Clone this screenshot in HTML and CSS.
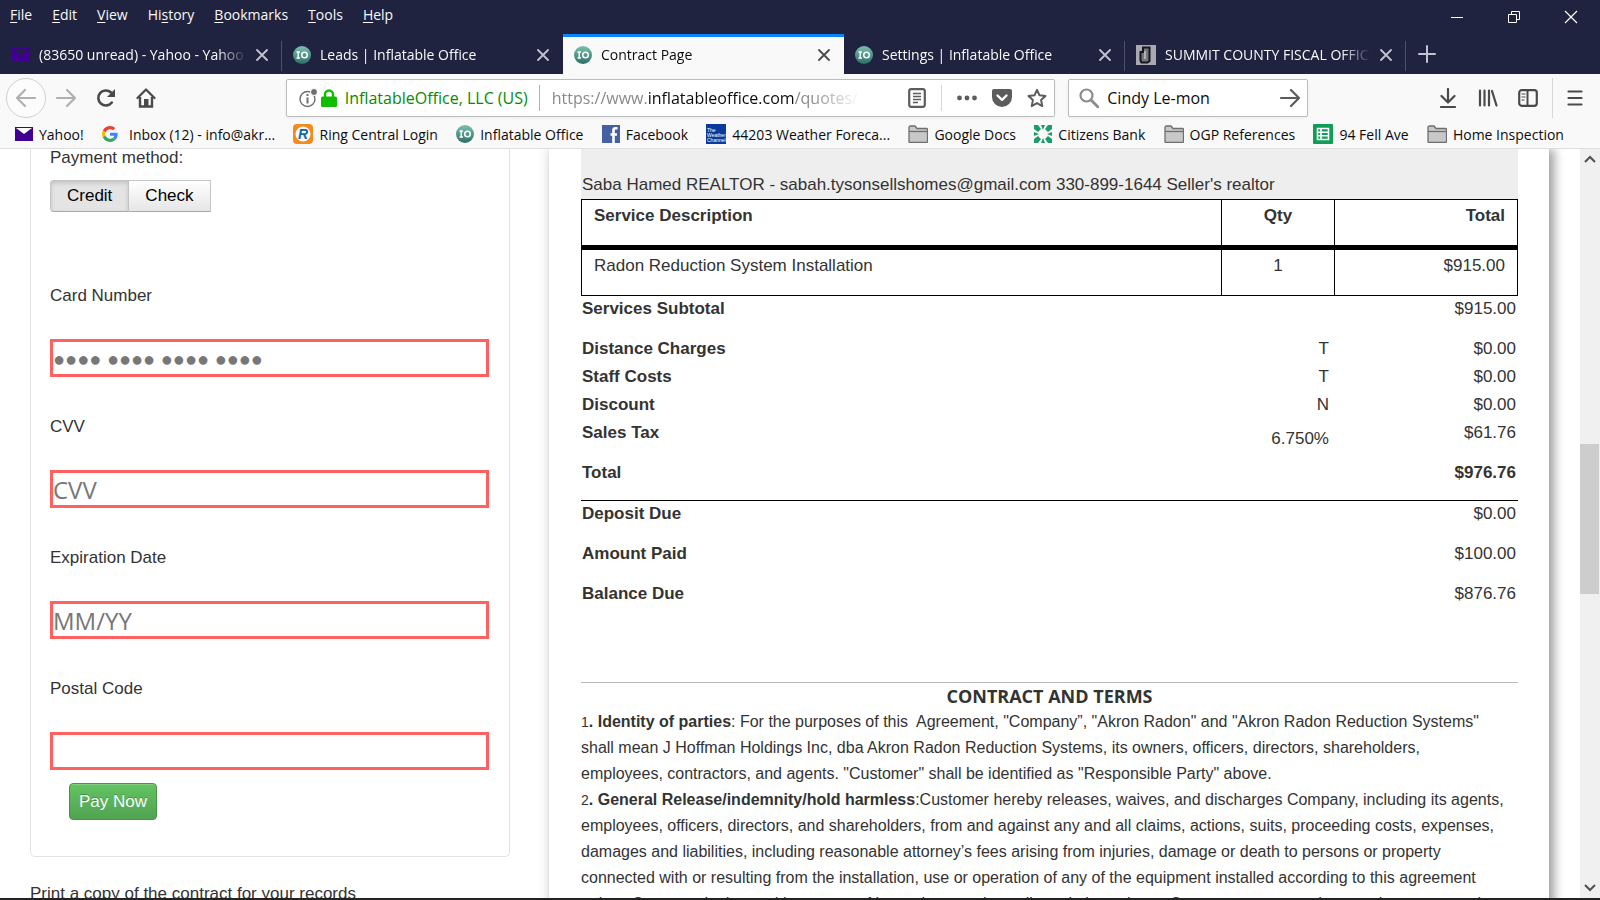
FILE: index.html
```html
<!DOCTYPE html>
<html lang="en">
<head>
    <meta charset="UTF-8">
    <meta name="viewport" content="width=device-width, initial-scale=1.0">
    <title>Contract Page</title>
    <link rel="stylesheet" href="styles.css">
</head>
<body>
    <!-- Shared icons -->
    <svg class="defs" width="0" height="0">
        <defs>
            <linearGradient id="io-bg" x1="0" y1="0" x2="0" y2="1">
                <stop offset="0" stop-color="#7cc0b0"/>
                <stop offset="1" stop-color="#2c6f66"/>
            </linearGradient>
            <symbol id="io" viewBox="0 0 18 18">
                <circle cx="9" cy="9" r="9" fill="url(#io-bg)"/>
                <path d="M3.5 6h3.5M3.5 12h3.5M5.2 6v6" stroke="#fff" stroke-width="1.4" fill="none"/>
                <circle cx="11.5" cy="9" r="2.8" stroke="#fff" stroke-width="1.5" fill="none"/>
            </symbol>
            <symbol id="close" viewBox="0 0 12 12">
                <path d="M1 1l10 10M11 1L1 11" stroke="currentColor" stroke-width="1.8" stroke-linecap="round"/>
            </symbol>
            <symbol id="mail" viewBox="0 0 18 14">
                <path d="M0 0h18v14H0z" fill="#400090"/>
                <path d="M1 1l8 6 8-6z" fill="var(--flap)"/>
            </symbol>
            <symbol id="folder" viewBox="0 0 20 18">
                <path d="M1 16.500V2.500Q1 1 2.500 1H7l2 2.500h9.500q1 0 1 1V16.500q0 1-1 1H2q-1 0-1-1z" fill="#c8c8c8" stroke="#6e6e6e" stroke-width="1.300"/>
                <path d="M1 6.500h18.500" stroke="#6e6e6e" stroke-width="1.300"/>
            </symbol>
        </defs>
    </svg>

    <header class="titlebar">
        <nav class="menubar">
            <button><u>F</u>ile</button>
            <button><u>E</u>dit</button>
            <button><u>V</u>iew</button>
            <button>Hi<u>s</u>tory</button>
            <button><u>B</u>ookmarks</button>
            <button><u>T</u>ools</button>
            <button><u>H</u>elp</button>
        </nav>
        <div class="window-controls">
            <button aria-label="Minimize"><svg width="14" height="14"><path d="M1 7.500h12" stroke="#fff"/></svg></button>
            <button aria-label="Restore"><svg width="14" height="14" fill="none" stroke="#fff"><path d="M1.500 4.500h8v8h-8zM4.500 4.500v-3h8v8h-3"/></svg></button>
            <button aria-label="Close"><svg width="14" height="14"><path d="M1 1l12 12M13 1L1 13" stroke="#fff" stroke-width="1.200"/></svg></button>
        </div>
    </header>

    <div class="tabs">
        <div class="tab">
            <svg class="fav dark-mail" width="18" height="14"><use href="#mail"/></svg>
            <span class="tab-title">(83650 unread) - Yahoo - Yahoo Mail</span>
            <button class="tab-close" aria-label="Close tab"><svg width="12" height="12"><use href="#close"/></svg></button>
        </div>
        <div class="tab">
            <svg class="fav" width="18" height="18"><use href="#io"/></svg>
            <span class="tab-title">Leads | Inflatable Office</span>
            <button class="tab-close" aria-label="Close tab"><svg width="12" height="12"><use href="#close"/></svg></button>
        </div>
        <div class="tab active">
            <svg class="fav" width="18" height="18"><use href="#io"/></svg>
            <span class="tab-title">Contract Page</span>
            <button class="tab-close" aria-label="Close tab"><svg width="12" height="12"><use href="#close"/></svg></button>
        </div>
        <div class="tab">
            <svg class="fav" width="18" height="18"><use href="#io"/></svg>
            <span class="tab-title">Settings | Inflatable Office</span>
            <button class="tab-close" aria-label="Close tab"><svg width="12" height="12"><use href="#close"/></svg></button>
        </div>
        <div class="tab">
            <svg class="fav" width="20" height="20" viewBox="0 0 20 20">
                <path d="M0 0h20v20H0z" fill="#a9a9b4"/>
                <path d="M7 2.500h6.500V16l-2 1.500H5.500l-1-2V7H7z" fill="#777783" stroke="#17171c" stroke-width="2"/>
                <path d="M9 6v8" stroke="#c4c4cc" stroke-width="1.500"/>
            </svg>
            <span class="tab-title">SUMMIT COUNTY FISCAL OFFICE</span>
            <button class="tab-close" aria-label="Close tab"><svg width="12" height="12"><use href="#close"/></svg></button>
        </div>
        <button class="new-tab" aria-label="New tab"><svg width="18" height="18"><path d="M9 1v16M1 9h16" stroke="#c3c3cf" stroke-width="2" stroke-linecap="round"/></svg></button>
    </div>

    <div class="toolbar">
        <button class="back" aria-label="Back"><svg width="22" height="20" fill="none" stroke="#b0b0b2" stroke-width="2.200" stroke-linecap="round" stroke-linejoin="round"><path d="M20 10H2M10 2l-8 8 8 8"/></svg></button>
        <button class="tool" aria-label="Forward"><svg width="22" height="20" fill="none" stroke="#b0b0b2" stroke-width="2.200" stroke-linecap="round" stroke-linejoin="round"><path d="M2 10h18M12 2l8 8-8 8"/></svg></button>
        <button class="tool" aria-label="Reload"><svg width="20" height="20"><path d="M15.800 14.500A7.500 7.500 0 1 1 15 4.500" fill="none" stroke="#4a4a4b" stroke-width="2.600" stroke-linecap="round"/><path d="M19 1v8h-8z" fill="#4a4a4b"/></svg></button>
        <button class="tool" aria-label="Home"><svg width="20" height="20"><path d="M1.500 10L10 1.500l8.500 8.500" fill="none" stroke="#4a4a4b" stroke-width="2.200" stroke-linecap="round" stroke-linejoin="round"/><path d="M4 9v9.500h12V9" fill="none" stroke="#4a4a4b" stroke-width="2.400"/><path d="M8 11h4.500v8H8z" fill="#4a4a4b"/></svg></button>
        <span class="spacer"></span>
        <div class="urlbar">
            <svg width="18" height="20"><circle cx="8.500" cy="11" r="7.500" fill="none" stroke="#6e6e6e" stroke-width="1.400"/><path d="M8.500 9.500v6M8.500 6v2" stroke="#6e6e6e" stroke-width="2"/><circle cx="15" cy="4" r="3.500" fill="#6e6e6e" stroke="#fff"/></svg>
            <svg width="16" height="18"><path d="M4 8V5.500a4 4 0 0 1 8 0V8" fill="none" stroke="#12bc00" stroke-width="2.400"/><rect y="7.500" width="16" height="10.500" rx="1.500" fill="#12bc00"/></svg>
            <span class="owner">InflatableOffice, LLC (US)</span>
            <a class="url" href="#">https://www.<b>inflatableoffice.com</b>/quotes/</a>
            <button class="reader" aria-label="Reader view"><svg width="18" height="20" fill="none" stroke="#5c5c5e"><rect x="1.200" y="1.200" width="15.600" height="17.600" rx="2" stroke-width="2.200"/><path d="M5 5.500h8M5 8.500h8M5 11.500h8M5 14.500h5" stroke-width="1.300"/></svg></button>
            <button aria-label="Page actions"><svg width="20" height="6" fill="#5c5c5e"><circle cx="2.500" cy="3" r="2.400"/><circle cx="10" cy="3" r="2.400"/><circle cx="17.500" cy="3" r="2.400"/></svg></button>
            <button aria-label="Save to Pocket"><svg width="20" height="18"><path d="M2 0h16q2 0 2 2v6a10 10 0 0 1-20 0V2Q0 0 2 0z" fill="#5c5c5e"/><path d="M5.500 6.500L10 10.800l4.500-4.300" fill="none" stroke="#fff" stroke-width="2.400" stroke-linecap="round" stroke-linejoin="round"/></svg></button>
            <button aria-label="Bookmark this page"><svg width="20" height="20"><path d="M10 1.800l2.500 5.500 6 .7-4.400 4.100 1.200 6-5.300-3-5.300 3 1.200-6L1.500 8l6-.7z" fill="none" stroke="#5c5c5e" stroke-width="2" stroke-linejoin="round"/></svg></button>
        </div>
        <div class="search">
            <svg width="20" height="20" fill="none" stroke="#8c8c8e" stroke-linecap="round"><circle cx="7.500" cy="7.500" r="6" stroke-width="2.200"/><path d="M12 12l7 7" stroke-width="2.800"/></svg>
            <input type="text" aria-label="Search" value="Cindy Le-mon">
            <button aria-label="Go"><svg width="20" height="18" fill="none" stroke="#5c5c5e" stroke-width="2.200" stroke-linecap="round" stroke-linejoin="round"><path d="M1 9h18M11 1l8 8-8 8"/></svg></button>
        </div>
        <span class="spacer"></span>
        <button class="tool" aria-label="Downloads"><svg width="18" height="20" fill="none" stroke="#4a4a4b" stroke-width="2.200" stroke-linecap="round" stroke-linejoin="round"><path d="M9 1v13M2.500 8L9 14.500 15.500 8M2 19h14"/></svg></button>
        <button class="tool" aria-label="Library"><svg width="20" height="18" fill="none" stroke="#4a4a4b" stroke-width="2.200" stroke-linecap="round"><path d="M2 1.500v15M6.500 1.500v15M11 1.500v15M14 2l4.500 14.500"/></svg></button>
        <button class="tool" aria-label="Sidebars"><svg width="20" height="18" fill="none" stroke="#4a4a4b"><rect x="1.200" y="1.200" width="17.600" height="15.600" rx="2.500" stroke-width="2.200"/><path d="M9.500 1v16" stroke-width="2"/><path d="M3.500 5h4M3.500 8h4M3.500 11h3" stroke-width="1.200"/></svg></button>
        <button class="tool menu" aria-label="Menu"><svg width="16" height="18"><path d="M1.500 2.500h13M1.500 9h13M1.500 15.500h13" stroke="#4a4a4b" stroke-width="2.200" stroke-linecap="round"/></svg></button>
    </div>

    <nav class="bookmarks">
        <a href="#"><svg class="light-mail" width="18" height="14"><use href="#mail"/></svg>Yahoo!</a>
        <a href="#" class="google"><svg width="16" height="16" viewBox="0 0 48 48"><path fill="#ea4335" d="M24 9.500c3.500 0 6.700 1.200 9.200 3.600l6.900-6.900C35.900 2.400 30.500 0 24 0 14.600 0 6.500 5.400 2.600 13.200l8 6.200C12.400 13.700 17.700 9.500 24 9.500z"/><path fill="#4285f4" d="M47 24.600c0-1.600-.2-3.100-.4-4.600H24v9h12.900c-.6 3-2.300 5.500-4.700 7.200l7.700 6C44.400 38 47 31.900 47 24.600z"/><path fill="#fbbc05" d="M10.500 28.600a14.500 14.500 0 0 1 0-9.200l-8-6.200a24 24 0 0 0 0 21.600z"/><path fill="#34a853" d="M24 48c6.500 0 11.900-2.100 15.900-5.800l-7.700-6c-2.200 1.500-4.900 2.300-8.200 2.300-6.300 0-11.600-4.200-13.500-9.900l-8 6.200C6.500 42.600 14.600 48 24 48z"/></svg>Inbox (12) - info@akr...</a>
        <a href="#"><svg width="20" height="20"><rect width="20" height="20" rx="4" fill="#f58a1f"/><circle cx="10" cy="10" r="7.500" fill="#fff"/><text x="5" y="15" class="logo-r">R</text></svg>Ring Central Login</a>
        <a href="#"><svg width="18" height="18"><use href="#io"/></svg>Inflatable Office</a>
        <a href="#"><svg width="18" height="18"><path d="M0 0h18v18H0z" fill="#4560a3"/><path d="M15.500 3.200h-2q-2 0-2 2V18M8.500 9.500h6.500" fill="none" stroke="#fff" stroke-width="2.600"/></svg>Facebook</a>
        <a href="#"><svg width="20" height="20"><path d="M0 0h20v20H0z" fill="#0b3a9b"/><text x="1" y="8" class="logo-w">The</text><text x="1" y="13" class="logo-w">Weather</text><text x="1" y="18" class="logo-w">Channel</text></svg>44203 Weather Foreca...</a>
        <a href="#"><svg width="20" height="18"><use href="#folder"/></svg>Google Docs</a>
        <a href="#"><svg width="18" height="18" fill="#1f9a6a"><path d="M0 0h4l3 4-3 3-4-3zM18 0h-4l-3 4 3 3 4-3zM0 18h4l3-4-3-3-4 3zM18 18h-4l-3-4 3-3 4 3zM7 0h4L9 5zM7 18h4l-2-5zM0 7v4l5-2zM18 7v4l-5-2z"/></svg>Citizens Bank</a>
        <a href="#"><svg width="20" height="18"><use href="#folder"/></svg>OGP References</a>
        <a href="#"><svg width="20" height="20"><rect width="20" height="20" rx="1" fill="#109d58"/><path d="M4.500 4.500h11v11h-11zM4.500 8.200h11M4.500 11.800h11M8 4.500v11" fill="none" stroke="#fff" stroke-width="1.600"/></svg>94 Fell Ave</a>
        <a href="#"><svg width="20" height="18"><use href="#folder"/></svg>Home Inspection</a>
    </nav>

    <div class="viewport">
        <main class="page">
            <section class="payment">
                <form class="card">
                    <div class="method-label">Payment method:</div>
                    <div class="btn-group">
                        <button type="button" class="pressed">Credit</button>
                        <button type="button">Check</button>
                    </div>
                    <label for="card-number">Card Number</label>
                    <input type="text" id="card-number" placeholder="●●●● ●●●● ●●●● ●●●●">
                    <label for="cvv">CVV</label>
                    <input type="text" id="cvv" placeholder="CVV">
                    <label for="exp">Expiration Date</label>
                    <input type="text" id="exp" placeholder="MM/YY">
                    <label for="postal">Postal Code</label>
                    <input type="text" id="postal">
                    <button type="submit" class="pay">Pay Now</button>
                </form>
                <p class="print">Print a copy of the contract for your records</p>
            </section>

            <article class="paper">
                <div class="realtor">Saba Hamed REALTOR - sabah.tysonsellshomes@gmail.com 330-899-1644 Seller's realtor</div>
                <table class="services">
                    <thead>
                        <tr><th>Service Description</th><th class="qty">Qty</th><th class="amount">Total</th></tr>
                    </thead>
                    <tbody>
                        <tr><td>Radon Reduction System Installation</td><td class="qty">1</td><td class="amount">$915.00</td></tr>
                    </tbody>
                </table>
                <table class="summary">
                    <tr class="tall"><th>Services Subtotal</th><td></td><td class="value">$915.00</td></tr>
                    <tr><th>Distance Charges</th><td>T</td><td class="value">$0.00</td></tr>
                    <tr><th>Staff Costs</th><td>T</td><td class="value">$0.00</td></tr>
                    <tr><th>Discount</th><td>N</td><td class="value">$0.00</td></tr>
                    <tr class="tall"><th>Sales Tax</th><td class="rate">6.750%</td><td class="value">$61.76</td></tr>
                    <tr class="tall total"><th>Total</th><td></td><td class="value">$976.76</td></tr>
                    <tr class="tall"><th>Deposit Due</th><td></td><td class="value">$0.00</td></tr>
                    <tr class="tall"><th>Amount Paid</th><td></td><td class="value">$100.00</td></tr>
                    <tr><th>Balance Due</th><td></td><td class="value">$876.76</td></tr>
                </table>
                <div class="terms">
                    <h2>CONTRACT AND TERMS</h2>
                    <p><span class="num">1</span><b>. Identity of parties</b>: For the purposes of this&nbsp; Agreement, "Company”, "Akron Radon" and "Akron Radon Reduction Systems"<br>
                    shall mean J Hoffman Holdings Inc, dba Akron Radon Reduction Systems, its owners, officers, directors, shareholders,<br>
                    employees, contractors, and agents. "Customer" shall be identified as "Responsible Party" above.</p>
                    <p><span class="num">2</span><b>. General Release/indemnity/hold harmless</b>:Customer hereby releases, waives, and discharges Company, including its agents,<br>
                    employees, officers, directors, and shareholders, from and against any and all claims, actions, suits, proceeding costs, expenses,<br>
                    damages and liabilities, including reasonable attorney’s fees arising from injuries, damage or death to persons or property<br>
                    connected with or resulting from the installation, use or operation of any of the equipment installed according to this agreement<br>
                    unless Company is deemed by a court of law to be grossly negligent in its actions.&nbsp; Company cannot under any circumstances be</p>
                </div>
            </article>
        </main>
        <div class="scrollbar">
            <button aria-label="Scroll up"><svg width="12" height="8"><path d="M1 7l5-5 5 5" fill="none" stroke="#505050" stroke-width="2"/></svg></button>
            <div class="track"><div class="thumb"></div></div>
            <button aria-label="Scroll down"><svg width="12" height="8"><path d="M1 1l5 5 5-5" fill="none" stroke="#505050" stroke-width="2"/></svg></button>
        </div>
    </div>
</body>
</html>
```

FILE: styles.css
```css
* {
    box-sizing: border-box;
}

body {
    margin: 0;
    height: 100vh;
    display: flex;
    flex-direction: column;
    overflow: hidden;
    font-family: "Open Sans", "Noto Sans", sans-serif;
    font-size: 14px;
    color: #000;
    background-color: #fff;
    border-bottom: 2px solid #222;
}

button {
    padding: 0;
    border: none;
    background: none;
    font: inherit;
    color: inherit;
}

svg {
    display: block;
    flex: none;
}

.defs {
    position: absolute;
}

/* Title bar and menu */
.titlebar {
    flex: none;
    height: 34px;
    display: flex;
    justify-content: space-between;
    background-color: #202340;
    color: #f9f9fa;
}

.menubar {
    display: flex;
    align-items: center;
    gap: 20px;
    height: 28px;
    padding-left: 10px;
}

.menubar u {
    text-underline-offset: 2px;
}

.window-controls {
    display: flex;
    align-items: center;
    gap: 43px;
    padding-right: 22px;
}

/* Tabs */
.tabs {
    flex: none;
    height: 40px;
    display: flex;
    padding-left: 1px;
    background-color: #202340;
    color: #f9f9fa;
}

.tab {
    flex: 0 1 281px;
    min-width: 0;
    display: flex;
    align-items: center;
    gap: 9px;
    padding: 0 14px 2px 11px;
    border-top: 3px solid transparent;
    background: linear-gradient(#4d4f68, #4d4f68) right center / 1px 30px no-repeat;
}

.tab.active {
    border-top-color: #0a84ff;
    background: #f9f9fa;
    color: #0c0c0d;
}

.tab:has(+ .active) {
    background: none;
}

.tab-title {
    flex: 1;
    overflow: hidden;
    white-space: nowrap;
    mask-image: linear-gradient(to left, transparent, #000 30px);
}

.tab-close {
    color: #c3c3cf;
}

.active .tab-close {
    color: #4a4a4b;
}

.dark-mail {
    --flap: #202340;
}

.light-mail {
    --flap: #fff;
}

.new-tab {
    padding: 0 12px;
}

/* Navigation toolbar */
.toolbar {
    flex: none;
    height: 48px;
    display: flex;
    align-items: center;
    padding: 0 4px 0 6px;
    background-color: #f9f9fa;
    font-size: 16px;
}

.tool {
    width: 40px;
    height: 40px;
    display: grid;
    place-items: center;
}

.back {
    width: 40px;
    height: 40px;
    display: grid;
    place-items: center;
    border: 1px solid #d0d0d2;
    border-radius: 50%;
    background-color: #fcfcfc;
}

.menu {
    width: 44px;
    margin-left: 4px;
    border-left: 1px solid #d7d7db;
}

.spacer {
    flex: 123;
}

.urlbar,
.search {
    height: 38px;
    display: flex;
    align-items: center;
    border: 1px solid #bdbdbf;
    border-radius: 2px;
    background-color: #fff;
    box-shadow: 0 1px 3px rgba(0, 0, 0, 0.06);
}

.urlbar {
    flex: 769;
    min-width: 0;
    gap: 15px;
    padding: 0 7px 0 12px;
}

.urlbar svg + svg {
    margin-left: -11px;
}

.owner {
    margin-left: -7px;
    padding-right: 11px;
    line-height: 26px;
    border-right: 1px solid #7cd873;
    color: #058b00;
    white-space: nowrap;
}

.url {
    flex: 1;
    margin-left: -3px;
    overflow: hidden;
    color: #8a8a8c;
    text-decoration: none;
    white-space: nowrap;
    mask-image: linear-gradient(to right, #000 260px, transparent 308px);
}

.url b {
    font-weight: normal;
    color: #0c0c0d;
}

.reader {
    padding: 3px 15px 3px 0;
    border-right: 1px solid #d7d7db;
}

.search {
    flex: none;
    width: 240px;
    margin-left: 13px;
    gap: 8px;
    padding: 0 7px 0 10px;
}

.search input {
    flex: 1;
    min-width: 0;
    padding: 0;
    border: none;
    font: inherit;
    color: #0c0c0d;
}

/* Bookmarks toolbar */
.bookmarks {
    flex: none;
    height: 27px;
    display: flex;
    align-items: center;
    justify-content: space-between;
    padding: 0 36px 2px 15px;
    border-bottom: 1px solid #dededf;
    background-color: #f9f9fa;
}

.bookmarks a {
    display: flex;
    align-items: center;
    gap: 6px;
    color: #0c0c0d;
    text-decoration: none;
    white-space: nowrap;
}

.bookmarks .google {
    gap: 11px;
}

.logo-r {
    font: italic bold 14px "Liberation Sans", sans-serif;
    fill: #0a68b1;
}

.logo-w {
    font: 5px "Liberation Sans", sans-serif;
    fill: #fff;
}

/* Page */
.viewport {
    flex: 1;
    min-height: 0;
    display: flex;
    font-family: "Liberation Sans", Arial, sans-serif;
    font-size: 17px;
    line-height: 20px;
    color: #333;
}

.page {
    flex: 1;
    display: grid;
    grid-template-columns: 12fr 25fr;
    column-gap: 39px;
    padding: 0 31px 0 30px;
    overflow: hidden;
}

.card {
    display: flex;
    flex-direction: column;
    padding: 0 20px 36px 19px;
    border: 1px solid #e3e3e3;
    border-top: none;
    border-radius: 0 0 5px 5px;
}

.method-label {
    line-height: 18px;
    margin-bottom: 13px;
}

.btn-group {
    display: flex;
    margin-bottom: 34px;
}

.btn-group button {
    height: 32px;
    padding: 0 16px;
    border: 1px solid #c4c4c4;
    border-bottom-color: #a9a9a9;
    background: linear-gradient(#fff, #e6e6e6);
    color: #000;
}

.btn-group button + button {
    border-left: none;
}

.btn-group .pressed {
    border-radius: 4px 0 0 4px;
    background: #e4e4e4;
    box-shadow: inset 0 2px 4px rgba(0, 0, 0, 0.15);
}

.card label {
    margin: 40px 0 33px;
}

.card input {
    height: 38px;
    padding: 0;
    border: 3px solid #ff6060;
    font: 24px "Open Sans", sans-serif;
    color: #333;
}

.card input::placeholder {
    color: #777;
}

#card-number {
    padding-top: 3px;
    font: 20px "Liberation Sans", sans-serif;
}

.pay {
    align-self: flex-start;
    height: 37px;
    margin: 13px 0 0 19px;
    padding: 0 9px;
    border: 1px solid #48924a;
    border-radius: 4px;
    background: linear-gradient(#62c462, #51a351);
    box-shadow: inset 0 1px 0 rgba(255, 255, 255, 0.2);
    color: #fff;
    text-shadow: 0 -1px 0 rgba(0, 0, 0, 0.25);
}

.print {
    margin: 27px 0 0;
}

.paper {
    padding: 0 31px 0 32px;
    background-color: #fff;
    box-shadow: 0 0 14px rgba(0, 0, 0, 0.1), 5px 0 10px rgba(0, 0, 0, 0.35);
    clip-path: inset(0 -31px 0 -12px);
}

.realtor {
    padding: 26px 1px 4px;
    background-color: #eee;
}

.services,
.summary {
    width: 100%;
    border-collapse: collapse;
    text-align: left;
}

.services th,
.services td {
    padding: 6px 12px 19px;
    border: 1px solid #000;
}

.services th {
    border-bottom-width: 5px;
}

.services .qty {
    width: 113px;
    text-align: center;
}

.services .amount {
    width: 183px;
    text-align: right;
}

.summary th,
.summary td {
    padding: 3px 2px 5px 1px;
    vertical-align: top;
}

.summary td {
    text-align: right;
}

.summary .value {
    width: 187px;
}

.summary .tall th,
.summary .tall td {
    padding-bottom: 17px;
}

.summary .tall .rate {
    padding-top: 9px;
    padding-bottom: 11px;
}

.summary .total {
    border-bottom: 1px solid #000;
    font-weight: bold;
}

.terms {
    margin-top: 73px;
    border-top: 1px solid #bbb;
    font-size: 16px;
    line-height: 26px;
    white-space: nowrap;
}

.terms h2 {
    margin: 0;
    font: bold 18px/26px "Open Sans", sans-serif;
    text-align: center;
}

.terms p {
    margin: 0;
}

.num {
    font-size: 14px;
}

/* Scrollbar */
.scrollbar {
    flex: none;
    width: 20px;
    display: flex;
    flex-direction: column;
    background-color: #f0f0f0;
}

.scrollbar button {
    height: 20px;
    display: grid;
    place-items: center;
}

.track {
    flex: 1;
    padding-top: 275px;
}

.thumb {
    height: 150px;
    margin-right: 1px;
    background-color: #cdcdcd;
}
```
